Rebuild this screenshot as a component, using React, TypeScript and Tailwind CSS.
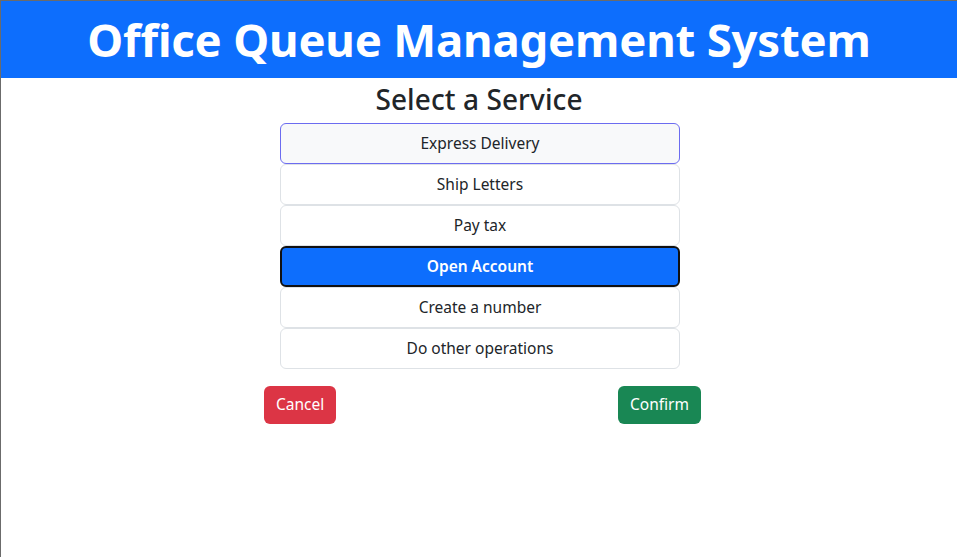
import React, { useState } from 'react';

const services = [
  'Express Delivery',
  'Ship Letters',
  'Pay tax',
  'Open Account',
  'Create a number',
  'Do other operations',
];

const font = { fontFamily: '"Noto Sans", "Open Sans", sans-serif' };

export default function App() {
  const [selected, setSelected] = useState('Open Account');
  const hovered = 'Express Delivery';

  return (
    <div className="h-screen border-l border-t border-[#6b6b6b] bg-white text-[#212529]" style={font}>
      <header className="h-[77px] bg-[#0d6efd] flex items-center justify-center">
        <h1 className="text-[45.5px] font-bold text-white leading-none tracking-[-0.2px] pt-[1px]">
          Office Queue Management System
        </h1>
      </header>
      <div className="flex flex-col items-center">
        <h3 className="mt-[1px] text-[28px] font-medium leading-[40px] tracking-[0.1px]">Select a Service</h3>
        <ul className="mt-[4px] w-[400px] ml-[2px] flex flex-col">
          {services.map((s) => {
            const active = s === selected;
            const hover = s === hovered;
            return (
              <li
                key={s}
                onClick={() => setSelected(s)}
                className={
                  'h-[41px] flex items-center justify-center rounded-[6px] text-[15.5px] cursor-pointer ' +
                  (active
                    ? 'bg-[#0d6efd] text-white font-semibold border-2 border-[#111]'
                    : hover
                      ? 'bg-[#f8f9fa] border border-[#6c6cf0]'
                      : 'bg-white border border-[#dee2e6]')
                }
              >
                {s}
              </li>
            );
          })}
        </ul>
        <div className="mt-[17px] w-[437px] ml-[7px] flex justify-between">
          <button className="h-[38px] px-[12px] rounded-[6px] bg-[#dc3545] text-white text-[15.5px]">Cancel</button>
          <button className="h-[38px] px-[12px] rounded-[6px] bg-[#198754] text-white text-[15.5px]">Confirm</button>
        </div>
      </div>
    </div>
  );
}
